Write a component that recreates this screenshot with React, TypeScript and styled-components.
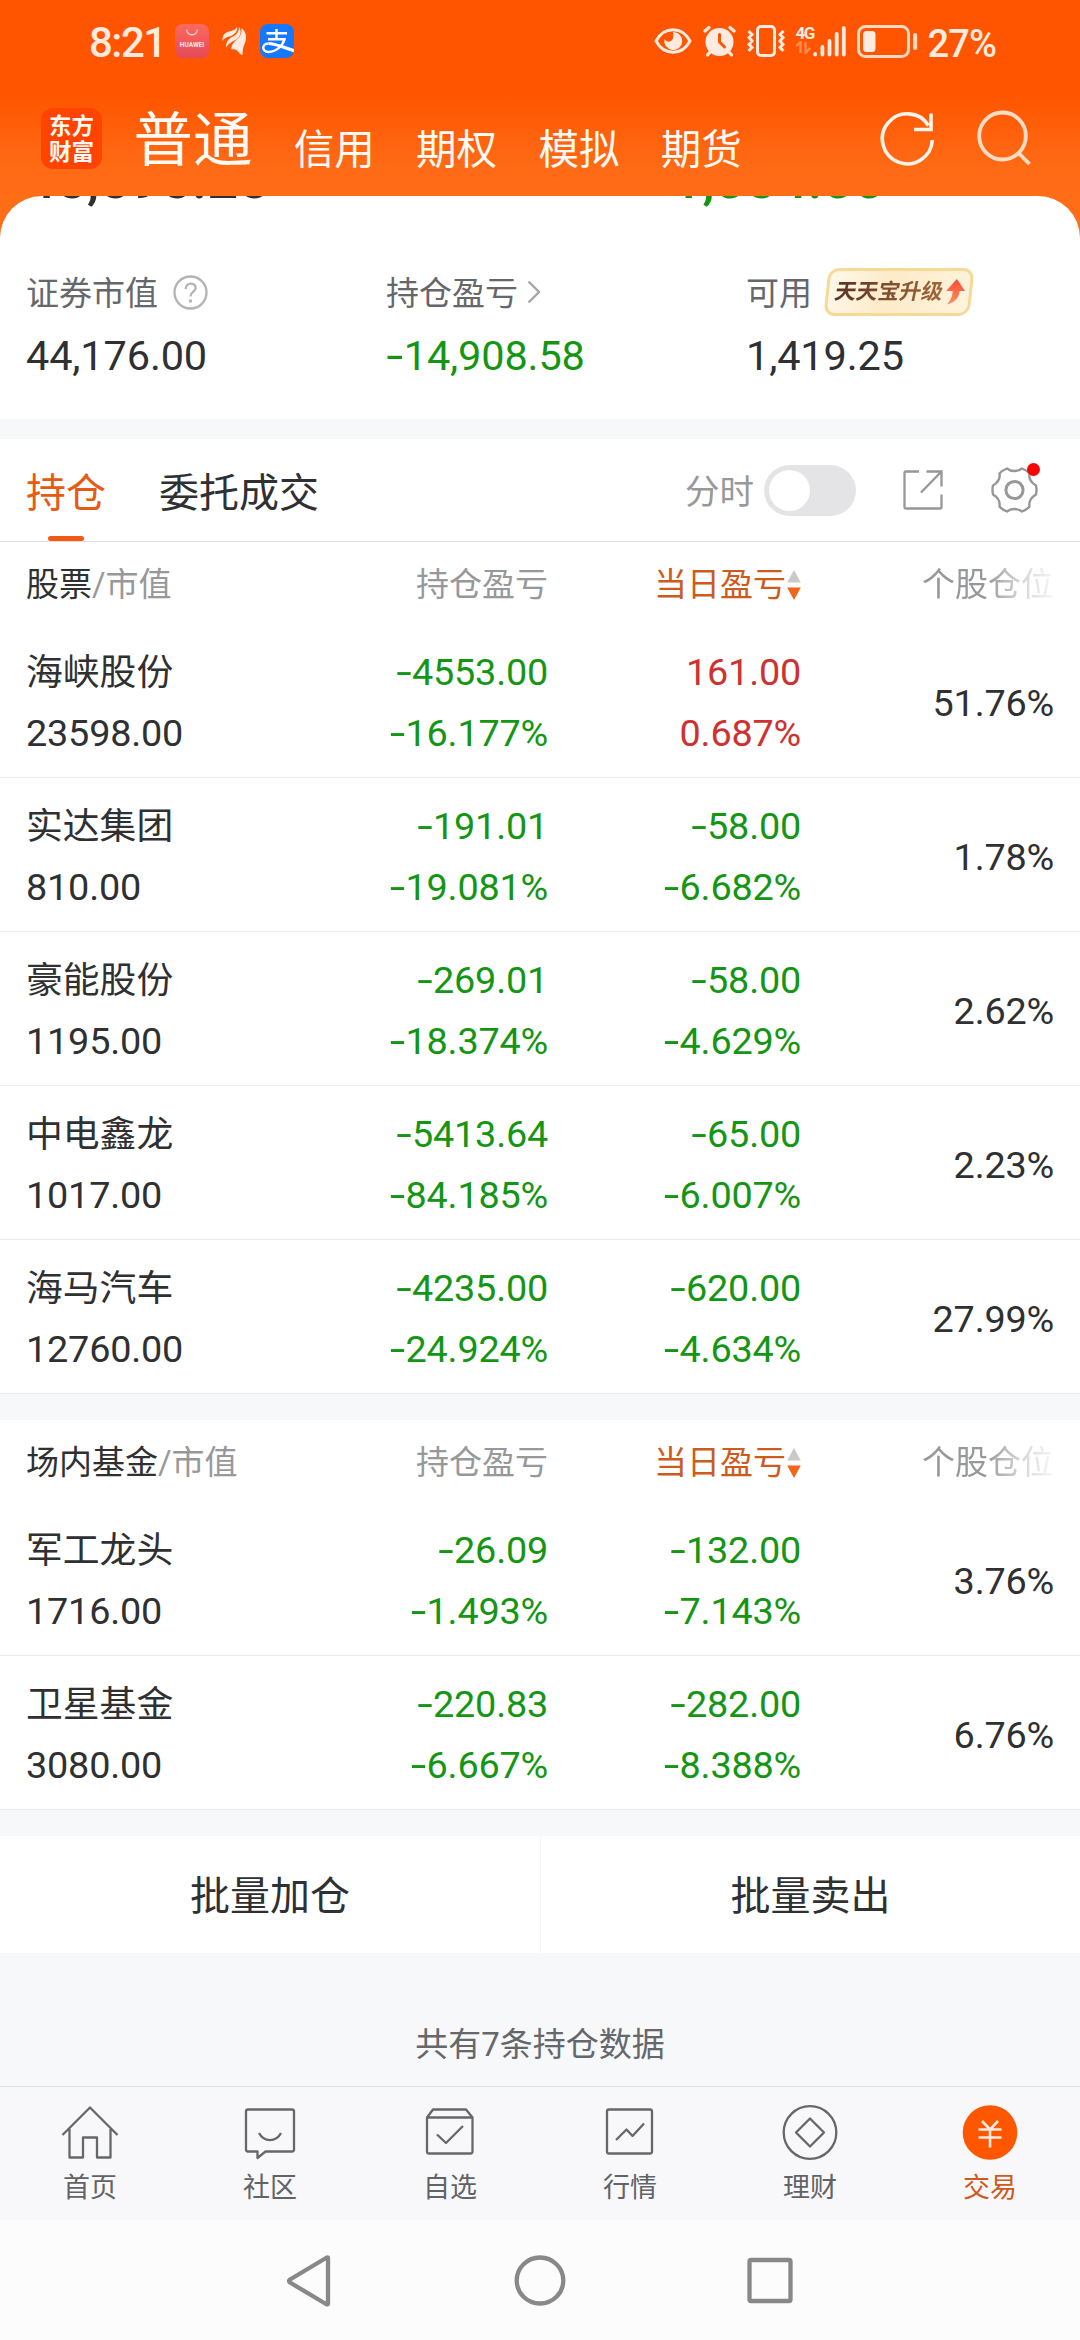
import React from "react";
import styled, { createGlobalStyle } from "styled-components";

const FONT = `Roboto, "Noto Sans CJK SC", "Noto Sans", sans-serif`;

const GlobalStyle = createGlobalStyle`
  * { box-sizing: border-box; }
  body { margin: 0; background: #f7f8fa; }
  svg { display: block; flex: none; }
`;

const green = "#149614";
const red = "#cf3030";
const ink = "#2f3032";
const orange = "#ff5600";

const Phone = styled.main`
  width: 1080px;
  height: 2340px;
  display: flex;
  flex-direction: column;
  overflow: hidden;
  background: #f7f8fa;
  font-family: ${FONT};
  color: ${ink};
  white-space: nowrap;
`;

/* ---------- Header ---------- */

const Top = styled.header`
  height: 196px;
  flex: none;
  background: linear-gradient(#ff5500 0, #ff5500 94px, #ff6a15 165px, #ff6d17 196px);
`;

const StatusBar = styled.div`
  height: 84px;
  padding: 0 84px 2px 89px;
  display: flex;
  align-items: center;
  justify-content: space-between;
  color: #ffeadf;
`;

const StatusGroup = styled.div<{ $gap: number }>`
  display: flex;
  align-items: center;
  gap: ${(p) => p.$gap}px;
`;

const Clock = styled.span`
  width: 73px;
  font-size: 42px;
  line-height: 50px;
  letter-spacing: -1.5px;
  margin-top: 4px;
  font-weight: 500;
`;

const Percent = styled.span`
  font-size: 38px;
  line-height: 44px;
  letter-spacing: -0.9px;
  margin: 5px 0 0 -1px;
  font-weight: 500;
`;

const StoreIcon = styled.div`
  width: 34px;
  height: 34px;
  border-radius: 8px;
  display: flex;
  flex-direction: column;
  align-items: center;
  padding-top: 5px;
  gap: 5px;
  background: linear-gradient(#fb6a5c, #e54a59);
  font-size: 6.5px;
  line-height: 8px;
  font-weight: 700;
  color: #ffe9e4;
`;

const AliIcon = styled.div`
  width: 34px;
  height: 34px;
  border-radius: 8px;
  overflow: hidden;
  background: #1677ff;
`;

const AccountBar = styled.div`
  height: 112px;
  padding: 0 49px 0 41px;
  display: flex;
  align-items: flex-start;
`;

const Logo = styled.div`
  width: 61px;
  height: 61px;
  margin-top: 24px;
  border-radius: 12px;
  background: #ff4300;
  color: #fff8f2;
  font-size: 22.5px;
  line-height: 26px;
  font-weight: 700;
  text-align: center;
  padding-top: 5px;
`;

const AccountTab = styled.span<{ $active?: boolean }>`
  font-size: ${(p) => (p.$active ? 59.5 : 40.5)}px;
  line-height: 60px;
  margin-top: ${(p) => (p.$active ? 27 : 35.5)}px;
  margin-left: ${(p) => (p.$active ? 31.5 : 41.3)}px;
  color: #fffaf5;
  font-weight: 400;
`;

const HeaderTools = styled.div`
  margin-left: auto;
  margin-top: 25px;
  display: flex;
  gap: 42px;
`;

/* ---------- Summary card ---------- */

const CardBackdrop = styled.div`
  flex: none;
  background: linear-gradient(#ff6d17 0, #ff6d17 60px, #fff 60px);
`;

const Card = styled.section`
  height: 223px;
  overflow: hidden;
  border-radius: 42px 42px 0 0;
  background: #fff;
`;

const Totals = styled.div`
  margin-top: -44px;
  height: 55px;
  display: grid;
  grid-template-columns: 623px 1fr;
  padding-left: 25px;
  font-size: 54.5px;
  line-height: 55px;
  font-weight: 500;
`;

const Summary = styled.div`
  padding: 61px 0 0 26px;
  display: grid;
  grid-template-columns: 360px 360px 1fr;
`;

const SummaryLabel = styled.div<{ $gap: number }>`
  display: flex;
  align-items: center;
  gap: ${(p) => p.$gap}px;
  height: 48px;
  font-size: 33px;
  color: #66676a;
`;

const LabelText = styled.span`
  line-height: 46px;
  padding-top: 3px;
`;

const SummaryValue = styled.div<{ $color?: string }>`
  margin-top: 15px;
  font-size: 41.5px;
  line-height: 50px;
  letter-spacing: -0.15px;
  color: ${(p) => p.$color || ink};
`;

const Dash = styled.span`
  font-size: 1.5em;
  font-weight: 300;
  line-height: 0;
  vertical-align: -0.115em;
`;

const Promo = styled.div`
  width: 146px;
  height: 48px;
  padding-left: 2px;
  display: flex;
  align-items: center;
  justify-content: center;
  gap: 4px;
  border: 3px solid #f6d996;
  border-radius: 11px;
  background: linear-gradient(100deg, #fff8e9, #fdebc9 40%, #fff3dc);
  transform: skewX(-6deg);
`;

const PromoText = styled.span`
  font-size: 21.6px;
  line-height: 40px;
  font-weight: 700;
  background: linear-gradient(90deg, #5b3423, #a3683a);
  background-clip: text;
  color: transparent;
  transform: skewX(-6deg);
`;

const Gap = styled.div<{ $h: number }>`
  height: ${(p) => p.$h}px;
  flex: none;
  background: #f7f8fa;
`;

/* ---------- Position tabs ---------- */

const Tabs = styled.nav`
  height: 103px;
  flex: none;
  padding: 0 42px 0 26px;
  display: flex;
  align-items: center;
  background: #fff;
  border-bottom: 1px solid #dedede;
`;

const Tab = styled.span<{ $active?: boolean }>`
  position: relative;
  height: 102px;
  line-height: 109px;
  margin-right: 53px;
  font-size: 40px;
  color: ${(p) => (p.$active ? "#e65a14" : ink)};
  &::after {
    content: "";
    display: ${(p) => (p.$active ? "block" : "none")};
    position: absolute;
    left: 22px;
    bottom: 0;
    width: 36px;
    height: 5px;
    border-radius: 3px;
    background: #f05a14;
  }
`;

const TabTools = styled.div`
  margin-left: auto;
  display: flex;
  align-items: center;
  color: #97989a;
  font-size: 34.5px;
`;

const ToolLabel = styled.span`
  line-height: 50px;
  padding-top: 4px;
`;

const Switch = styled.span`
  width: 92px;
  height: 51px;
  margin: 0 47px 0 10px;
  padding: 5px;
  border-radius: 26px;
  background: #e4e4e6;
  &::before {
    content: "";
    display: block;
    width: 41px;
    height: 41px;
    border-radius: 50%;
    background: #fff;
  }
`;

const GearWrap = styled.span`
  position: relative;
  margin-left: 48px;
  &::after {
    content: "";
    position: absolute;
    top: -3px;
    right: -2px;
    width: 13px;
    height: 13px;
    border-radius: 50%;
    background: #fa0000;
  }
`;

/* ---------- Table ---------- */

const Table = styled.section`
  flex: none;
  background: #fff;
`;

const HeadRow = styled.div`
  height: 82px;
  padding: 6px 26px 0 26px;
  display: grid;
  grid-template-columns: 522px 253px 253px;
  font-size: 33px;
  line-height: 74px;
  color: #97989a;
`;

const HeadCell = styled.span<{ $tone?: string; $fade?: boolean }>`
  height: 74px;
  display: flex;
  justify-content: flex-end;
  align-items: center;
  gap: 1px;
  color: ${(p) => p.$tone || "inherit"};
  ${(p) =>
    p.$fade &&
    `mask-image: linear-gradient(90deg, #000 0, #000 73%, rgba(0,0,0,.4) 87%, rgba(0,0,0,.08) 100%);`}
`;

const HeadTitle = styled.b`
  font-weight: 400;
  color: ${ink};
`;

const HeadName = styled.span`
  grid-column: 1;
  grid-row: 1;
`;

const HeadProfit = styled(HeadCell)`
  grid-column: 1;
  grid-row: 1;
`;

const Row = styled.div`
  height: 154px;
  padding: 18px 26px 13px 26px;
  display: grid;
  grid-template-columns: 260px 262px 253px 253px;
  border-bottom: 1px solid #ececec;
  font-size: 37.8px;
  line-height: 61px;
  letter-spacing: -0.2px;
`;

const Name = styled.div`
  font-size: 36.8px;
  letter-spacing: 0;
`;

const Cell = styled.div<{ $color?: string; $right?: boolean }>`
  color: ${(p) => p.$color || ink};
  text-align: ${(p) => (p.$right ? "right" : "left")};
`;

const Weight = styled.div`
  align-self: center;
  text-align: right;
`;

/* ---------- Footer ---------- */

const Actions = styled.div`
  height: 117px;
  flex: none;
  display: grid;
  grid-template-columns: 1fr 1fr;
  background: #fff;
`;

const Action = styled.button`
  border: 0;
  padding: 5px 0 0;
  background: none;
  font: 400 40px/112px ${FONT};
  color: ${ink};
  & + & {
    border-left: 1px solid #f5f5f6;
  }
`;

const Count = styled.div`
  height: 133px;
  flex: none;
  padding-top: 61px;
  text-align: center;
  font-size: 33px;
  line-height: 61px;
  color: #66676a;
`;

const BottomTabs = styled.nav`
  height: 134px;
  flex: none;
  border-top: 1px solid #dfe0e2;
  background: #f8f8fb;
  display: grid;
  grid-template-columns: repeat(6, 1fr);
`;

const BottomTab = styled.div<{ $active?: boolean }>`
  display: flex;
  flex-direction: column;
  align-items: center;
  padding-top: 16px;
  font-size: 27px;
  line-height: 34px;
  gap: 10px;
  color: ${(p) => (p.$active ? "#cf5a1c" : "#626365")};
`;

const SystemNav = styled.div`
  flex: 1;
  display: flex;
  justify-content: center;
  gap: 179px;
  padding-top: 34px;
  background: #fcfcfc;
`;

/* ---------- Drawings ---------- */

const Butterfly = () => (
  <svg width="25" height="30" viewBox="0 0 25 30" fill="#ffeadf">
    <path d="M0.500 15C0 8 4 6 9 5C12 4 14 3 15 1C16 5 13 8 9 10C5 11 2 12 0.500 15Z" />
    <path d="M4 21.500C4 14 8 12 12 10C15.500 7.500 17 5 17 1C20.500 6 18 11.500 13.500 14C9 16 6 18 4 21.500Z" />
    <path d="M9.500 23.500C9 17.500 13 15.500 16 12.500C19 9.500 20 6 19.500 2C25 6.500 25 13 22.500 18C21 22 20.500 25 20.500 29C15 27.500 17 22 9.500 23.500Z" />
  </svg>
);

const AliMark = () => (
  <svg width="34" height="34" viewBox="0 0 34 34" fill="none" stroke="#fff">
    <path strokeWidth="2.400" d="M6.500 9.300H27M16.500 5V15M8 15.300H24.500C22.500 22 16 28 8.500 28C1.500 28 1.500 19.500 8.500 19.500" />
    <path strokeWidth="3.200" d="M8.500 19.500C16 19.500 24 24 35 27" />
  </svg>
);

const Eye = () => (
  <svg width="38" height="30" viewBox="0 0 38 30">
    <path d="M2 15C10 0 28 0 36 15C28 30 10 30 2 15Z" fill="none" stroke="#ffeadf" strokeWidth="3" />
    <path d="M19 6A9 9 0 1 1 10.500 13C14 18 21 16 19 6Z" fill="#ffeadf" />
  </svg>
);

const Alarm = () => (
  <svg width="33" height="32" viewBox="0 0 33 32" stroke="#ffeadf" strokeWidth="3.200" strokeLinecap="round">
    <circle cx="16.500" cy="17" r="14" fill="#ffeadf" stroke="none" />
    <path d="M2 6L6 2.500M31 6L27 2.500M7 27L4.500 30M26 27L28.500 30" />
    <path d="M16.500 9.500V17L21.500 22" fill="none" stroke="#ff5500" strokeWidth="3" />
  </svg>
);

const Vibrate = () => (
  <svg width="38" height="32" viewBox="0 0 38 32" fill="none" stroke="#ffeadf" strokeWidth="3">
    <rect x="10.500" y="1.500" width="17" height="29" rx="3.500" />
    <path d="M1.500 6L5 9.500L2 12.500L5 16L2 19.500L5 22.500L1.500 26M36.500 6L33 9.500L36 12.500L33 16L36 19.500L33 22.500L36.500 26" />
  </svg>
);

const SignalWrap = styled.div`
  display: flex;
  align-items: flex-end;
`;

const Network = styled.div`
  width: 17px;
  height: 32px;
  font-size: 17px;
  line-height: 16px;
  letter-spacing: -1.5px;
  font-weight: 700;
  color: #ffeadf;
`;

const Signal = () => (
  <SignalWrap>
    <Network>
      4G
      <svg width="15" height="13" viewBox="0 0 15 13" fill="none" stroke="#ff8b50" strokeWidth="2.400">
        <path d="M0 5L4.500 1V12M9.500 1V12L14 7" />
      </svg>
    </Network>
    <svg width="33" height="32" viewBox="0 0 33 32" stroke="#ffeadf" strokeWidth="3.800" strokeLinecap="round">
      <path d="M2.200 29V29.500M9.400 22V29.500M16.500 16V29.500M23.700 9V29.500M30.800 3V29.500" />
    </svg>
  </SignalWrap>
);

const Battery = () => (
  <svg width="61" height="33" viewBox="0 0 61 33">
    <rect x="1.500" y="1.500" width="50" height="30" rx="7" fill="none" stroke="#ffd9c2" strokeWidth="3" />
    <rect x="6" y="6" width="12.500" height="21" rx="3.500" fill="#ffeadf" />
    <rect x="56" y="8" width="4.200" height="17" rx="2" fill="#ffd9c2" />
  </svg>
);

const Refresh = () => (
  <svg width="56" height="58" viewBox="0 0 56 58" fill="none" stroke="#fff3ea" strokeWidth="3.600">
    <path d="M53.300 31A25 25 0 1 1 49.500 16.500" />
    <path d="M52 4.500V20.500H35" />
  </svg>
);

const Search = () => (
  <svg width="54" height="58" viewBox="0 0 54 58" fill="none" stroke="#ffdcc6" strokeWidth="3.800">
    <ellipse cx="25.500" cy="27" rx="23.300" ry="23.500" />
    <path d="M41 43.500L52.500 55" />
  </svg>
);

const Help = () => (
  <svg width="35" height="35" viewBox="0 0 35 35" fill="none" stroke="#b3b3b3" strokeWidth="2.300">
    <circle cx="17.500" cy="17.500" r="16" />
    <path d="M12.700 14C12.700 6.800 22.700 7 22.700 13C22.700 17 17.500 16.500 17.500 21.500" />
    <path d="M17.500 24.500V27.500" strokeWidth="2.900" />
  </svg>
);

const Chevron = () => (
  <svg width="13" height="24" viewBox="0 0 13 24" fill="none" stroke="#a5a5a5" strokeWidth="2.300">
    <path d="M1.500 1.500L12 12L1.500 22.500" />
  </svg>
);

const PromoArrow = () => (
  <svg width="19" height="26" viewBox="0 0 19 26">
    <defs>
      <linearGradient id="rise" x1="0" y1="0" x2="0" y2="1">
        <stop offset="0" stopColor="#fb4a32" />
        <stop offset="1" stopColor="#fa9364" />
      </linearGradient>
    </defs>
    <path d="M9.500 0L19 12H13.500C14 19 9 24 2 25.500C5 22 7 18 6.500 12H0Z" fill="url(#rise)" />
  </svg>
);

const Share = () => (
  <svg width="40" height="40" viewBox="0 0 40 40" fill="none" stroke="#979797" strokeWidth="2.300">
    <path d="M16 1.500H3Q1.500 1.500 1.500 3V37Q1.500 38.500 3 38.500H37Q38.500 38.500 38.500 37V24.500M23.500 1.500H38.500V16.500M38 2L18 22.500" />
  </svg>
);

const Gear = () => (
  <svg width="47" height="48" viewBox="0 0 47 48" fill="none" stroke="#979797" strokeWidth="2.400" strokeLinejoin="round">
    <path d="M16 2.500C20 5.800 27 5.800 31 2.500Q36 4.500 38.500 7.500C37.500 13 40 16.500 45 19.500Q46 24 45 28.500C40 31.500 37.500 35 38.500 40.500Q36 43.500 31 45.500C27 42.200 20 42.200 16 45.500Q11 43.500 8.500 40.500C9.500 35 7 31.500 2 28.500Q1 24 2 19.500C7 16.500 9.500 13 8.500 7.500Q11 4.500 16 2.500Z" />
    <circle cx="23.500" cy="24" r="8.600" strokeWidth="3" />
  </svg>
);

const SortArrows = () => (
  <svg width="14" height="30" viewBox="0 0 14 30">
    <path d="M7 0L13.800 12.500H0.200Z" fill="#c9c9c9" />
    <path d="M7 30L13.800 17.500H0.200Z" fill="#f26419" />
  </svg>
);

const line = { fill: "none", stroke: "#666768", strokeWidth: 2.3, strokeLinejoin: "round" as const };

const icons: Record<string, React.ReactNode> = {
  首页: <path {...line} d="M1.500 32L29 4.500L56.500 32M8.500 26V54.500H22V34.500H36V54.500H49.500V26" />,
  社区: (
    <path
      {...line}
      d="M7 6.500H51Q53 6.500 53 8.500V46.500Q53 48.500 51 48.500H24.500L16.500 55V48.500H7Q5 48.500 5 46.500V8.500Q5 6.500 7 6.500ZM18 30C23 39.500 35 39.500 40 30"
    />
  ),
  自选: (
    <path
      {...line}
      d="M6 14.500L12 6.500H45L51.500 14.500V48.500Q51.500 50.500 49.500 50.500H8Q6 50.500 6 48.500ZM6 14.500H51.500M16 31.500L25 40L42 23"
    />
  ),
  行情: (
    <path
      {...line}
      d="M8 6.500H49Q51 6.500 51 8.500V48.500Q51 50.500 49 50.500H8Q6 50.500 6 48.500V8.500Q6 6.500 8 6.500ZM15 37L25.500 26.500L31.500 33L43 20.500"
    />
  ),
  理财: (
    <>
      <circle {...line} cx="29" cy="29.500" r="26.300" />
      <path {...line} d="M29 15.500L43 29.500L29 43.500L15 29.500Z" />
    </>
  ),
  交易: (
    <>
      <circle cx="29" cy="29.500" r="27.300" fill={orange} />
      <path
        d="M21 18L29 26.500L37 18M17.500 26.500H40.500M17.500 34.500H40.500M29 26.500V44.500"
        fill="none"
        stroke="#ffeadf"
        strokeWidth="2.600"
      />
    </>
  ),
};

/* ---------- Data ---------- */

type Holding = [string, string, string, string, string, string, string];

const stocks: Holding[] = [
  ["海峡股份", "23598.00", "-4553.00", "-16.177%", "161.00", "0.687%", "51.76%"],
  ["实达集团", "810.00", "-191.01", "-19.081%", "-58.00", "-6.682%", "1.78%"],
  ["豪能股份", "1195.00", "-269.01", "-18.374%", "-58.00", "-4.629%", "2.62%"],
  ["中电鑫龙", "1017.00", "-5413.64", "-84.185%", "-65.00", "-6.007%", "2.23%"],
  ["海马汽车", "12760.00", "-4235.00", "-24.924%", "-620.00", "-4.634%", "27.99%"],
];

const funds: Holding[] = [
  ["军工龙头", "1716.00", "-26.09", "-1.493%", "-132.00", "-7.143%", "3.76%"],
  ["卫星基金", "3080.00", "-220.83", "-6.667%", "-282.00", "-8.388%", "6.76%"],
];

const Amount = ({ value }: { value: string }) =>
  value.startsWith("-") ? (
    <>
      <Dash>-</Dash>
      {value.slice(1)}
    </>
  ) : (
    <>{value}</>
  );

const toneOf = (value: string) => (value.startsWith("-") ? green : red);

const Holdings = ({ title, rows }: { title: string; rows: Holding[] }) => (
  <Table>
    <HeadRow>
      <HeadName>
        <HeadTitle>{title}</HeadTitle>/市值
      </HeadName>
      <HeadProfit>持仓盈亏</HeadProfit>
      <HeadCell $tone="#cd5b1e">
        当日盈亏
        <SortArrows />
      </HeadCell>
      <HeadCell $fade>个股仓位</HeadCell>
    </HeadRow>
    {rows.map(([name, worth, profit, profitRate, day, dayRate, weight]) => (
      <Row key={name}>
        <Cell>
          <Name>{name}</Name>
          <div>{worth}</div>
        </Cell>
        <Cell $right $color={toneOf(profit)}>
          <div><Amount value={profit} /></div>
          <div><Amount value={profitRate} /></div>
        </Cell>
        <Cell $right $color={toneOf(day)}>
          <div><Amount value={day} /></div>
          <div><Amount value={dayRate} /></div>
        </Cell>
        <Weight>{weight}</Weight>
      </Row>
    ))}
  </Table>
);

export default function App() {
  return (
    <Phone>
      <GlobalStyle />
      <Top>
        <StatusBar>
          <StatusGroup $gap={13}>
            <Clock>8:21</Clock>
            <StoreIcon>
              <svg width="12" height="7" viewBox="0 0 12 7" fill="none" stroke="#ffd9d2" strokeWidth="1.300">
                <path d="M0.700 0.500C1.500 7.500 10.500 7.500 11.300 0.500" />
              </svg>
              HUAWEI
            </StoreIcon>
            <Butterfly />
            <AliIcon>
              <AliMark />
            </AliIcon>
          </StatusGroup>
          <StatusGroup $gap={11}>
            <Eye />
            <Alarm />
            <Vibrate />
            <Signal />
            <Battery />
            <Percent>27%</Percent>
          </StatusGroup>
        </StatusBar>
        <AccountBar>
          <Logo>
            东方
            <br />
            财富
          </Logo>
          <AccountTab $active>普通</AccountTab>
          <AccountTab>信用</AccountTab>
          <AccountTab>期权</AccountTab>
          <AccountTab>模拟</AccountTab>
          <AccountTab>期货</AccountTab>
          <HeaderTools>
            <Refresh />
            <Search />
          </HeaderTools>
        </AccountBar>
      </Top>

      <CardBackdrop>
        <Card>
          <Totals>
            <span>45,595.25</span>
            <Cell $color={green}>
              <Amount value="-1,054.00" />
            </Cell>
          </Totals>
          <Summary>
            <div>
              <SummaryLabel $gap={15}>
                <LabelText>证券市值</LabelText>
                <Help />
              </SummaryLabel>
              <SummaryValue>44,176.00</SummaryValue>
            </div>
            <div>
              <SummaryLabel $gap={9}>
                <LabelText>持仓盈亏</LabelText>
                <Chevron />
              </SummaryLabel>
              <SummaryValue $color={green}>
                <Amount value="-14,908.58" />
              </SummaryValue>
            </div>
            <div>
              <SummaryLabel $gap={14}>
                <LabelText>可用</LabelText>
                <Promo>
                  <PromoText>天天宝升级</PromoText>
                  <PromoArrow />
                </Promo>
              </SummaryLabel>
              <SummaryValue>1,419.25</SummaryValue>
            </div>
          </Summary>
        </Card>
      </CardBackdrop>

      <Gap $h={20} />

      <Tabs>
        <Tab $active>持仓</Tab>
        <Tab>委托成交</Tab>
        <TabTools>
          <ToolLabel>分时</ToolLabel>
          <Switch />
          <Share />
          <GearWrap>
            <Gear />
          </GearWrap>
        </TabTools>
      </Tabs>

      <Holdings title="股票" rows={stocks} />
      <Gap $h={26} />
      <Holdings title="场内基金" rows={funds} />
      <Gap $h={26} />

      <Actions>
        <Action>批量加仓</Action>
        <Action>批量卖出</Action>
      </Actions>
      <Count>共有7条持仓数据</Count>

      <BottomTabs>
        {Object.keys(icons).map((label) => (
          <BottomTab key={label} $active={label === "交易"}>
            <svg width="58" height="58" viewBox="0 0 58 58">
              {icons[label]}
            </svg>
            {label}
          </BottomTab>
        ))}
      </BottomTabs>

      <SystemNav>
        <svg width="52" height="54" viewBox="0 0 52 54" fill="none" stroke="#888" strokeWidth="4.300" strokeLinejoin="round">
          <path d="M45 4V49.500Q45 51 43 50L7 28.500Q5 27 7 25.500L43 4Q45 3 45 4Z" />
        </svg>
        <svg width="52" height="54" viewBox="0 0 52 54" fill="none" stroke="#888" strokeWidth="4.300">
          <ellipse cx="26" cy="26.500" rx="23.300" ry="23" />
        </svg>
        <svg width="52" height="54" viewBox="0 0 52 54" fill="none" stroke="#888" strokeWidth="4.300">
          <rect x="4.500" y="6" width="41" height="41" rx="1.500" />
        </svg>
      </SystemNav>
    </Phone>
  );
}
